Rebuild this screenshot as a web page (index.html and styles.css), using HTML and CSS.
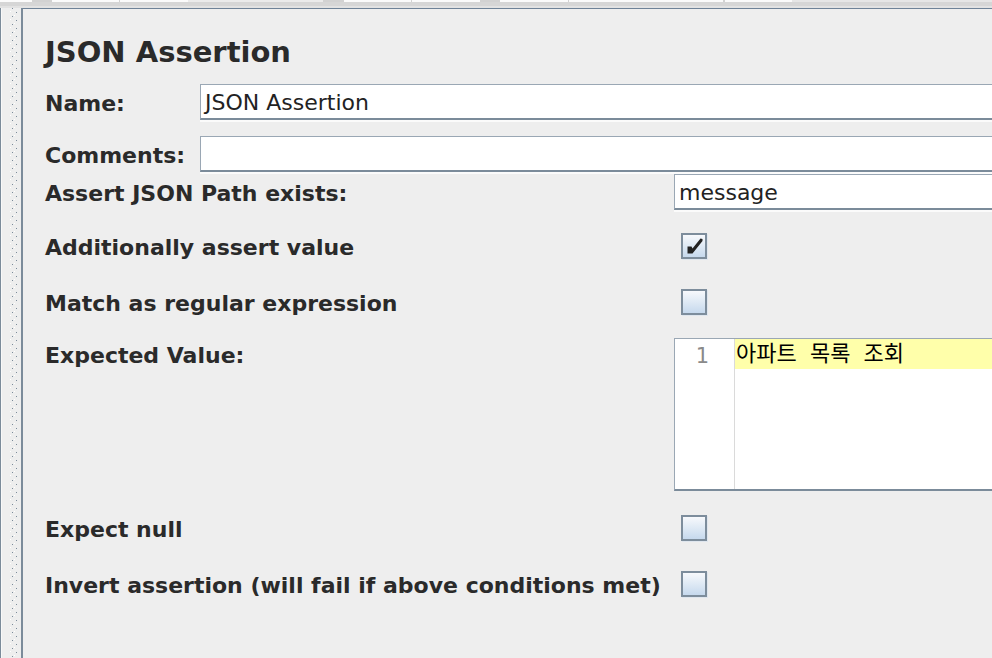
FILE: index.html
```html
<!DOCTYPE html>
<html lang="en">
<head>
<meta charset="utf-8">
<title>JSON Assertion</title>
<link rel="stylesheet" href="styles.css">
</head>
<body>
<div class="window">
  <div class="toolbar">
    <span class="seg w" style="width:32px"></span>
    <span class="seg g" style="width:20px"></span>
    <span class="seg w" style="width:67px"></span>
    <span class="seg g" style="width:1px"></span>
    <span class="seg w" style="width:68px"></span>
    <span class="seg l" style="width:135px"></span>
    <span class="seg g" style="width:21px"></span>
    <span class="seg w" style="width:67px"></span>
    <span class="seg g" style="width:1px"></span>
    <span class="seg w" style="width:68px"></span>
    <span class="seg g" style="width:20px"></span>
    <span class="seg w" style="width:68px"></span>
    <span class="seg g" style="width:1px"></span>
    <span class="seg w" style="width:154px"></span>
    <span class="seg g" style="width:2px"></span>
    <span class="seg w" style="width:67px"></span>
  </div>
  <div class="workspace">
    <div class="splitter">
      <svg class="dots" width="21" height="650" viewBox="0 0 21 650" aria-hidden="true">
        <defs>
          <pattern id="grip" x="8" y="0" width="10" height="8" patternUnits="userSpaceOnUse">
            <rect x="4" y="0" width="1" height="1" fill="#7b8b9a"/>
            <rect x="2" y="3" width="1" height="1" fill="#ffffff"/>
            <rect x="8" y="4" width="1" height="1" fill="#7b8b9a"/>
            <rect x="6" y="7" width="1" height="1" fill="#ffffff"/>
          </pattern>
        </defs>
        <rect x="0" y="0" width="1" height="650" fill="#7b8b9a"/>
        <rect x="1" y="0" width="1" height="650" fill="#f8f8f8"/>
        <rect x="8" y="0" width="10" height="650" fill="url(#grip)"/>
      </svg>
    </div>
    <div class="panel">
      <h1 class="title">JSON Assertion</h1>
      <div class="name-grid">
        <div class="label">Name:</div>
        <div class="field">JSON Assertion</div>
        <div class="label">Comments:</div>
        <div class="field"></div>
      </div>
      <div class="assert">
        <div class="row row-path">
          <div class="label col">Assert JSON Path exists:</div>
          <div class="field">message</div>
        </div>
        <div class="row row-check first-check">
          <div class="label col">Additionally assert value</div>
          <div class="checkbox">
            <svg width="22" height="22" viewBox="0 0 22 22" aria-hidden="true">
              <polygon points="4.5,11.5 8.5,11.5 9.5,13.5 17.5,3.5 19.5,4 19.5,6 9.5,18.5 4.5,18.5" fill="#222"/>
            </svg>
          </div>
        </div>
        <div class="row row-check">
          <div class="label col">Match as regular expression</div>
          <div class="checkbox"></div>
        </div>
        <div class="row row-area">
          <div class="label col area-label">Expected Value:</div>
          <div class="editor">
            <div class="gutter"><span class="lineno">1</span></div>
            <div class="code">
              <div class="current-line">아파트 목록 조회</div>
            </div>
          </div>
        </div>
        <div class="row row-check after-area">
          <div class="label col">Expect null</div>
          <div class="checkbox"></div>
        </div>
        <div class="row row-check">
          <div class="label col">Invert assertion (will fail if above conditions met)</div>
          <div class="checkbox"></div>
        </div>
      </div>
    </div>
  </div>
</div>
</body>
</html>
```

FILE: styles.css
```css
* {
  box-sizing: border-box;
}

html, body {
  margin: 0;
  padding: 0;
}

body {
  width: 992px;
  height: 658px;
  overflow: hidden;
  background: #eeeeee;
  font-family: "DejaVu Sans", "Noto Sans CJK KR", sans-serif;
  color: #2a2a2a;
}

.window {
  width: 992px;
  height: 658px;
  display: flex;
  flex-direction: column;
}

.toolbar {
  height: 8px;
  display: flex;
  align-items: flex-start;
  background: linear-gradient(#e6e6e6 0, #e6e6e6 2px, #d6d6d6 2px, #d6d6d6 6px, #e2e2e2 6px, #e2e2e2 8px);
  flex: none;
}

.seg {
  height: 2px;
  flex: none;
}

.seg.w { background: #fbfbfb; }
.seg.g { background: #d2d2d2; }
.seg.l { background: #ebebeb; }

.workspace {
  flex: 1;
  display: flex;
  min-height: 0;
}

.splitter {
  width: 21px;
  flex: none;
  overflow: hidden;
}

.dots {
  display: block;
}

.panel {
  flex: 1;
  border-left: 2px solid #7b8b9a;
  border-top: 1px solid #6f8398;
  padding-left: 22px;
  min-width: 0;
}

.title {
  margin: 25px 0 0 0;
  font-size: 29px;
  line-height: 36px;
  font-weight: bold;
  color: #2a2a2a;
  height: 50px;
}

.label {
  font-size: 22px;
  line-height: 25px;
  font-weight: bold;
  padding-top: 3px;
  white-space: nowrap;
}

.name-grid {
  display: grid;
  grid-template-columns: 155px 1fr;
  grid-auto-rows: 36px;
  row-gap: 16px;
  align-items: center;
}

.field {
  height: 36px;
  background: #ffffff;
  border-top: 1px solid #9aa7b4;
  border-left: 1px solid #9aa7b4;
  border-bottom: 2px solid #7b8b9a;
  box-shadow: 0 2px 0 #fbfbfb;
  font-size: 22px;
  line-height: 32px;
  padding-top: 2px;
  padding-left: 4px;
  color: #222222;
  white-space: nowrap;
  overflow: hidden;
}

.assert {
  margin-top: 2px;
}

.row {
  display: flex;
  align-items: center;
}

.col {
  width: 629px;
  flex: none;
}

.row .field {
  flex: 1;
}

.row-path {
  height: 36px;
}

.row-check {
  height: 56px;
}

.first-check {
  margin-top: 8px;
}

.after-area {
  margin-top: 9px;
}

.checkbox {
  width: 26px;
  height: 26px;
  margin-left: 7px;
  border: 2px solid #7d8d9c;
  background: linear-gradient(#f7f9fc, #c6d9ed);
  box-shadow: 1px 1px 0 #dfe6ee;
  display: flex;
  align-items: center;
  justify-content: center;
}

.checkbox svg {
  display: block;
}

.row-area {
  margin-top: 8px;
  align-items: flex-start;
}

.area-label {
  padding-top: 5px;
}

.editor {
  flex: 1;
  height: 153px;
  display: flex;
  background: #ffffff;
  border-top: 1px solid #9aa7b4;
  border-left: 1px solid #9aa7b4;
  border-bottom: 2px solid #7b8b9a;
}

.gutter {
  width: 60px;
  flex: none;
  border-right: 1px solid #dadada;
  text-align: right;
  padding-right: 25px;
}

.lineno {
  font-family: "DejaVu Sans", sans-serif;
  font-size: 21px;
  line-height: 35px;
  color: #8a8a8a;
}

.code {
  flex: 1;
}

.current-line {
  height: 30px;
  background: #ffffaa;
  font-family: "Liberation Mono", "Noto Sans CJK KR", monospace;
  font-size: 22px;
  line-height: 27px;
  padding-top: 3px;
  color: #000000;
  padding-left: 1px;
  white-space: pre;
}
```
